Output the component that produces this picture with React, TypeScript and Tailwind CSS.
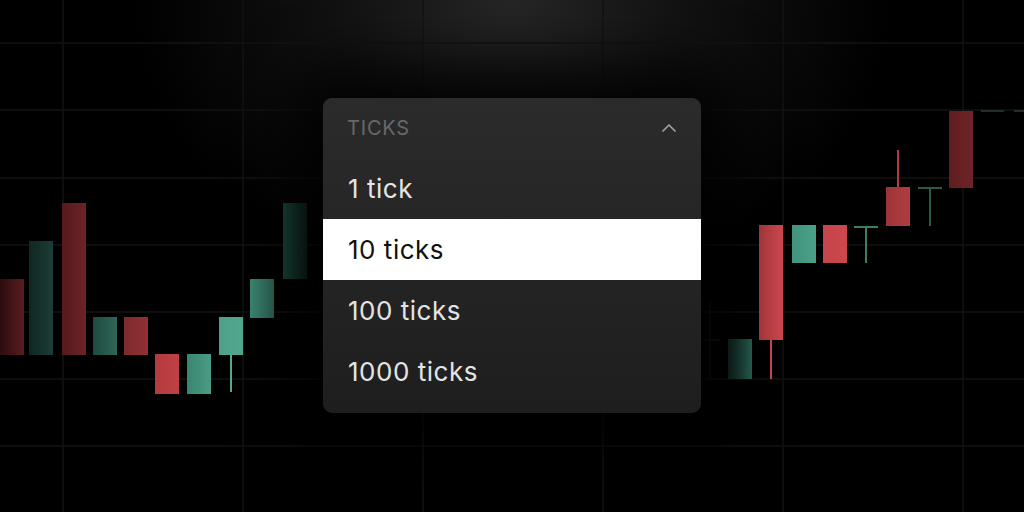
import { ChevronUp } from "lucide-react";

type Candle = {
  x: number;
  top: number;
  bottom: number;
  from: string;
  to: string;
  wick?: [number, number];
};

// price bars, left to right (pixel coords on the 1024x512 canvas)
const candles: Candle[] = [
  { x: 0, top: 279, bottom: 355, from: "#2a0d0e", to: "#5c1c1f" },
  { x: 29, top: 241, bottom: 355, from: "#0f2621", to: "#1c3e36" },
  { x: 62, top: 203, bottom: 355, from: "#561a1d", to: "#6e2226" },
  { x: 93, top: 317, bottom: 355, from: "#1f4a3f", to: "#2e6657" },
  { x: 124, top: 317, bottom: 355, from: "#7d2a2d", to: "#933034" },
  { x: 155, top: 354, bottom: 394, from: "#b33a3e", to: "#c04145" },
  { x: 187, top: 354, bottom: 394, from: "#3a8571", to: "#4a9c86" },
  { x: 219, top: 317, bottom: 355, from: "#4da18a", to: "#55ac94", wick: [355, 392] },
  { x: 250, top: 279, bottom: 318, from: "#3d8a75", to: "#2f6c5c" },
  { x: 283, top: 203, bottom: 279, from: "#1f4d42", to: "#12302a" },
  { x: 728, top: 339, bottom: 379, from: "#12302a", to: "#2d7060" },
  { x: 759, top: 225, bottom: 340, from: "#b83e42", to: "#d04a50", wick: [340, 379] },
  { x: 792, top: 225, bottom: 263, from: "#429580", to: "#4aa089" },
  { x: 823, top: 225, bottom: 263, from: "#c4454a", to: "#cd484d" },
  { x: 886, top: 187, bottom: 226, from: "#9c3538", to: "#b03c40", wick: [150, 187] },
  { x: 949, top: 111, bottom: 188, from: "#5e1d21", to: "#6e2428" },
];

// flat bars drawn as a "T"
const dojis = [
  { x: 854, y: 227, bottom: 263, color: "#3c7c6a" },
  { x: 918, y: 188, bottom: 226, color: "#2a5a4d" },
];

const vLines = [63, 243, 423, 603, 783, 963];
const hLines = [43, 110, 178, 245, 312, 379, 446];

const options = ["1 tick", "10 ticks", "100 ticks", "1000 ticks"];

function Chart() {
  return (
    <svg className="absolute inset-0" width={1024} height={512} viewBox="0 0 1024 512">
      <defs>
        {candles.map((c, i) => (
          <linearGradient key={i} id={`c${i}`} x1="0" x2="1" y1="0" y2="0">
            <stop offset="0" stopColor={c.from} />
            <stop offset="1" stopColor={c.to} />
          </linearGradient>
        ))}
      </defs>
      {vLines.map((x) => (
        <line key={x} x1={x} x2={x} y1={0} y2={512} stroke="#131313" strokeWidth={1.5} />
      ))}
      {hLines.map((y) => (
        <line key={y} x1={0} x2={1024} y1={y} y2={y} stroke="#131313" strokeWidth={1.5} />
      ))}

      {/* faint bar peeking out beside the menu */}
      <line x1={710} x2={710} y1={302} y2={378} stroke="#15201d" strokeWidth={1.5} />
      <line x1={704} x2={720} y1={340} y2={340} stroke="#15201d" strokeWidth={1.5} />

      {candles.map((c, i) => (
        <g key={i}>
          {c.wick && (
            <line
              x1={c.x + 12}
              x2={c.x + 12}
              y1={c.wick[0]}
              y2={c.wick[1]}
              stroke={c.to}
              strokeWidth={2}
            />
          )}
          <rect x={c.x} y={c.top} width={24} height={c.bottom - c.top} fill={`url(#c${i})`} />
        </g>
      ))}
      {dojis.map((d) => (
        <g key={d.x} stroke={d.color} strokeWidth={2}>
          <line x1={d.x} x2={d.x + 24} y1={d.y} y2={d.y} />
          <line x1={d.x + 12} x2={d.x + 12} y1={d.y} y2={d.bottom} />
        </g>
      ))}
      <line x1={981} x2={1004} y1={111} y2={111} stroke="#22302c" strokeWidth={2} />
      <line x1={1014} x2={1024} y1={111} y2={111} stroke="#22302c" strokeWidth={2} />
    </svg>
  );
}

export default function App() {
  const selected = "10 ticks";

  return (
    <div
      className="relative w-[1024px] h-[512px] overflow-hidden bg-black"
      style={{ fontFamily: "Inter, 'Noto Sans', sans-serif" }}
    >
      <div className="absolute inset-0 bg-[radial-gradient(ellipse_380px_300px_at_50%_0%,#262626_0%,#121212_45%,#000_100%)]" />
      <Chart />

      <div className="relative flex justify-center pt-[98px]">
        <div className="w-[378px] h-[315px] rounded-[9px] overflow-hidden bg-gradient-to-b from-[#2b2b2b] to-[#1e1e1e] shadow-[0_0_60px_30px_rgba(0,0,0,0.85)]">
          <div className="h-[60px] flex items-center justify-between pl-[24px] pr-[20px]">
            <span className="text-[20px] tracking-[0.04em] text-[#686868]">TICKS</span>
            <ChevronUp size={24} strokeWidth={1.75} className="text-[#a0a0a0]" />
          </div>
          {options.map((o) => (
            <div
              key={o}
              className={
                o === selected
                  ? "h-[61px] flex items-center pl-[25px] bg-white text-[26px] tracking-[0.02em] text-[#111]"
                  : "h-[61px] flex items-center pl-[25px] text-[26px] tracking-[0.02em] text-[#e4e4e4]"
              }
            >
              {o}
            </div>
          ))}
        </div>
      </div>
    </div>
  );
}
